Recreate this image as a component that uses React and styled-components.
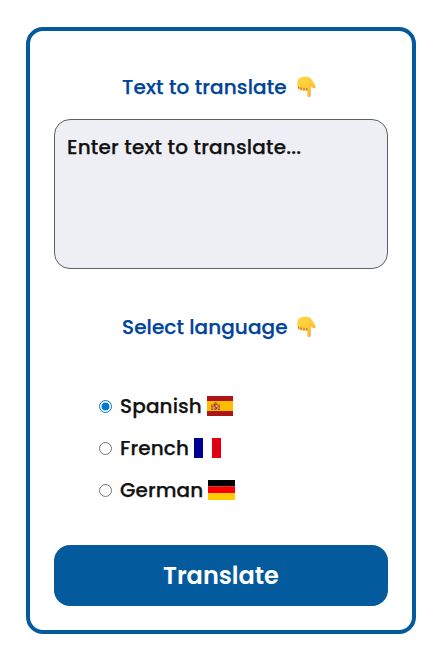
import React, { useState } from "react";
import styled, { createGlobalStyle } from "styled-components";

const GlobalStyle = createGlobalStyle`
  * { box-sizing: border-box; }
  body {
    margin: 0;
    background: #fff;
    font-family: Poppins, Inter, "Open Sans", sans-serif;
    font-size: 20px;
    font-weight: 500;
    color: #121212;
  }
`;

const Card = styled.main`
  width: 390px;
  height: 607px;
  margin: 27px 0 0 26px;
  padding: 41px 24px 24px;
  border: 4px solid #035a9d;
  border-radius: 17px;
  display: flex;
  flex-direction: column;
`;

const Heading = styled.h3`
  margin: 0;
  height: 30px;
  display: flex;
  align-items: center;
  padding-left: 68px;
  color: #00449a;
  font-size: 20px;
  font-weight: 500;
  white-space: nowrap;
`;

const Label = styled.span`
  flex: none;
  width: ${(p) => p.$width}px;
  line-height: 30px;
  letter-spacing: ${(p) => p.$spacing || 0}px;
  white-space: nowrap;
  -webkit-text-stroke: 0.25px currentColor;
`;

const Hand = styled.svg`
  flex: none;
  width: 20px;
  height: 22px;
  margin-left: 8px;
`;

const TextBox = styled.textarea`
  display: block;
  width: 334px;
  height: 150px;
  margin: 17px 0 43px;
  padding: 12px;
  border: 1px solid #5f6062;
  border-radius: 16px;
  outline: none;
  resize: none;
  background: #eeeff4;
  color: #121212;
  font: 500 20px/30px Poppins, Inter, "Open Sans", sans-serif;
  letter-spacing: 0.19px;
  -webkit-text-stroke: 0.25px currentColor;

  &::placeholder {
    color: #121212;
    opacity: 1;
  }
`;

const Options = styled.div`
  margin: 49px 0 40px 45px;
  display: flex;
  flex-direction: column;
  gap: 12px;
`;

const Option = styled.label`
  height: 30px;
  display: flex;
  align-items: center;
`;

const Radio = styled.input`
  appearance: none;
  flex: none;
  width: 13px;
  height: 13px;
  margin: 0 8px 0 0;
  border: 1px solid #767676;
  border-radius: 50%;
  background: #fff;

  &:checked {
    border-color: #0078d7;
    background: radial-gradient(circle, #0078d7 3.6px, #fff 4.3px);
  }
`;

const Flag = styled.svg`
  flex: none;
  width: ${(p) => p.$width}px;
  height: 20px;
  margin-left: 5px;
`;

const Submit = styled.button`
  width: 334px;
  height: 61px;
  padding: 0;
  border: 0;
  border-radius: 16px;
  background: #035a9d;
  color: #fff;
  font: 600 24px/61px Poppins, Inter, "Open Sans", sans-serif;
`;

const PointingHand = () => (
  <Hand viewBox="0 0 20 22" aria-label="pointing down">
    <defs>
      <linearGradient id="skin" x1="0" y1="0" x2="1" y2="1">
        <stop offset="0" stopColor="#ffd83f" />
        <stop offset=".6" stopColor="#ffc83a" />
        <stop offset="1" stopColor="#f7a52c" />
      </linearGradient>
    </defs>
    <path
      fill="url(#skin)"
      d="M3.2 2.200C5 .9 7.500.8 10.200.8c2.700 0 4.600 1 5.700 3l3.400 5.700c1.100 1.900-.6 3.200-2.100 2.500l-2.700-1.500v9.100c0 2.100-3.200 2.100-3.200 0v-5c-.8.600-1.900.5-2.500-.3-1 .7-2.200.4-2.800-.4-1.300.6-3.200.1-3.700-1.200C.8 9 .7 4.500 3.200 2.200z"
    />
    <path d="M5.100 11.800v1.900M8 12.300v1.900M10.900 12.300v1.800M2.700 11v1.300" stroke="#e8452c" strokeWidth="1" strokeLinecap="round" fill="none" />
    <path d="M14.200 10.600l-1.500-.9M14.100 11.300v8" stroke="#f29425" strokeWidth=".6" fill="none" />
  </Hand>
);

const SpainFlag = () => (
  <Flag $width={26} viewBox="0 0 26 20">
    <path fill="#ad1519" d="M0 0h26v20H0z" />
    <path fill="#fabd00" d="M0 5h26v10H0z" />
    <path fill="#b5442c" d="M4.500 8h1v6h-1zM11.500 8h1v6h-1zM6.500 7.500h4V9h-4z" />
    <path fill="#b34738" d="M6.500 9h4v4l-2 1.200-2-1.200z" />
    <path fill="#e6c3ae" d="M8.700 9.300h1.500v1.500H8.700zM6.800 11.200h1.400v1.300H6.800z" />
    <path fill="#75606c" d="M4 13h2v1H4zM11 13h2v1h-2zM8 10.500h1v1H8z" />
    <path fill="#b7552a" d="M7.500 6.200h2v1.300h-2zM4 10h2v1H4zM11 10h2v1h-2z" />
  </Flag>
);

const FranceFlag = () => (
  <Flag $width={27} viewBox="0 0 27 20">
    <path fill="#000091" d="M0 0h9v20H0z" />
    <path fill="#fff" d="M9 0h9v20H9z" />
    <path fill="#e1000f" d="M18 0h9v20h-9z" />
  </Flag>
);

const GermanyFlag = () => (
  <Flag $width={27} viewBox="0 0 27 20">
    <path fill="#000" d="M0 0h27v6.500H0z" />
    <path fill="#f00" d="M0 6.500h27v6.700H0z" />
    <path fill="#fc0" d="M0 13.200h27V20H0z" />
  </Flag>
);

const LANGUAGES = [
  { name: "Spanish", width: 82, spacing: 0.12, Icon: SpainFlag },
  { name: "French", width: 69, spacing: 0.12, Icon: FranceFlag },
  { name: "German", width: 83, spacing: 0.08, Icon: GermanyFlag },
];

export default function App() {
  const [language, setLanguage] = useState("Spanish");
  return (
    <>
      <GlobalStyle />
      <Card>
        <Heading>
          <Label $width={166} $spacing={0.13}>Text to translate</Label>
          <PointingHand />
        </Heading>
        <TextBox placeholder="Enter text to translate..." />
        <Heading>
          <Label $width={166} $spacing={0.07}>Select language</Label>
          <PointingHand />
        </Heading>
        <Options>
          {LANGUAGES.map(({ name, width, spacing, Icon }) => (
            <Option key={name}>
              <Radio type="radio" name="language" checked={language === name} onChange={() => setLanguage(name)} />
              <Label $width={width} $spacing={spacing}>{name}</Label>
              <Icon />
            </Option>
          ))}
        </Options>
        <Submit type="button">Translate</Submit>
      </Card>
    </>
  );
}
